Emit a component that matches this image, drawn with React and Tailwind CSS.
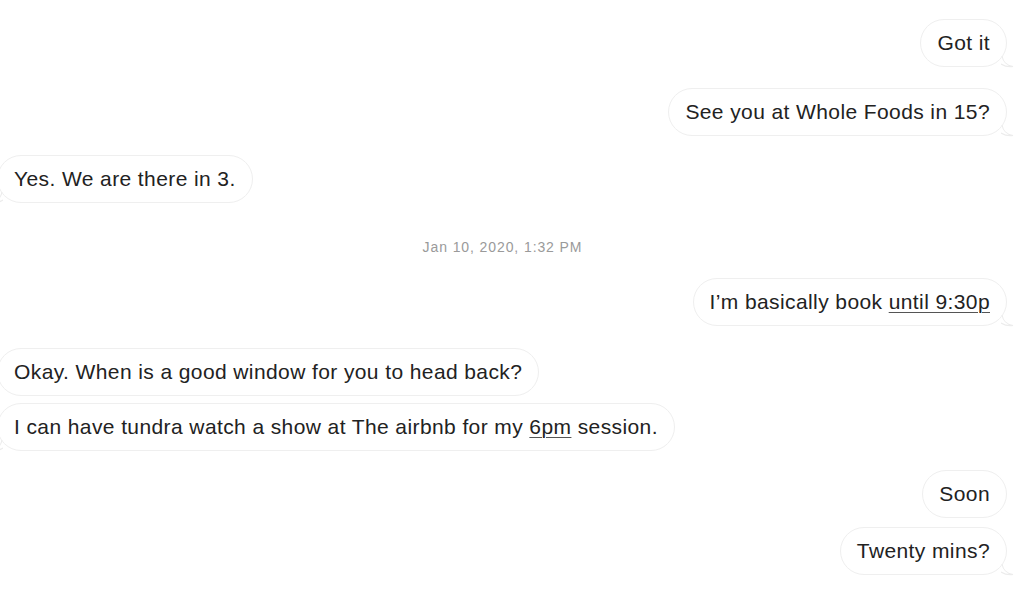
import React from "react";

const FONT = { fontFamily: '"Liberation Sans", Arial, sans-serif' };

function Tail({ side }) {
  if (side === "right") {
    return (
      <svg className="absolute bottom-[-2px] right-[-9px]" width="14" height="14" viewBox="0 0 14 14" fill="none">
        <path d="M1 2 C2 7 4 11 12 12.5 C8 13 4 12.5 0 10" fill="#ffffff" stroke="#ececec" strokeWidth="1.2" />
      </svg>
    );
  }
  return (
    <svg className="absolute bottom-[-2px] left-[-9px]" width="14" height="14" viewBox="0 0 14 14" fill="none">
      <path d="M13 2 C12 7 10 11 2 12.5 C6 13 10 12.5 14 10" fill="#ffffff" stroke="#ececec" strokeWidth="1.2" />
    </svg>
  );
}

function Bubble({ children, side = "right", tail = false, className = "" }) {
  return (
    <div className={`flex ${side === "right" ? "justify-end pr-4" : "justify-start -ml-[3px]"} ${className}`}>
      <div className="relative bg-white border border-[#efefef] rounded-[24px] px-4 py-[11px] text-[21px] leading-[24px] tracking-[0.4px] text-[#222222] whitespace-nowrap">
        {children}
        {tail && <Tail side={side} />}
      </div>
    </div>
  );
}

const Link = ({ children }) => (
  <span className="underline decoration-[#555555] decoration-1 underline-offset-[3px]">{children}</span>
);

export default function App() {
  return (
    <div className="w-[1023px] h-[599px] bg-white overflow-hidden" style={FONT}>
      <div className="pt-[19px] flex flex-col">
        <Bubble tail>Got it</Bubble>
        <Bubble tail className="mt-[21px]">See you at Whole Foods in 15?</Bubble>
        <Bubble side="left" tail className="mt-[19px]">Yes. We are there in 3.</Bubble>

        <div className="mt-[36px] mb-[23px] h-[16px] leading-[16px] pr-[18px] text-center text-[14px] tracking-[0.9px] text-[#9a9a9a]">
          Jan 10, 2020, 1:32 PM
        </div>

        <Bubble tail>
          I’m basically book <Link>until 9:30p</Link>
        </Bubble>
        <Bubble side="left" className="mt-[22px]">Okay. When is a good window for you to head back?</Bubble>
        <Bubble side="left" tail className="mt-[7px]">
          I can have tundra watch a show at The airbnb for my <Link>6pm</Link> session.
        </Bubble>
        <Bubble className="mt-[19px]">Soon</Bubble>
        <Bubble tail className="mt-[9px]">Twenty mins?</Bubble>
      </div>
    </div>
  );
}
